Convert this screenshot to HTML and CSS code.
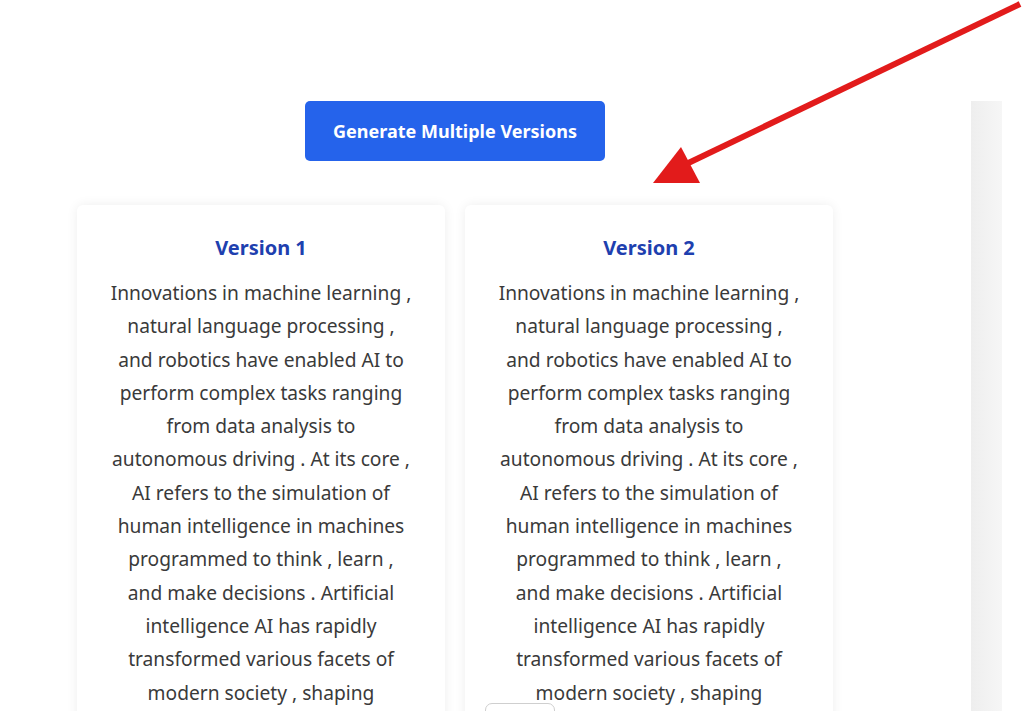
FILE: index.html
```html
<!DOCTYPE html>
<html lang="en">
<head>
<meta charset="utf-8">
<title>Generate Multiple Versions</title>
<link rel="stylesheet" href="styles.css">
</head>
<body>
<div class="page">
  <main class="main">
    <button class="generate-btn">Generate Multiple Versions</button>
    <div class="versions">
      <section class="card">
        <h2 class="card-title">Version 1</h2>
        <p class="card-text">Innovations in machine learning ,<br>natural language processing ,<br>and robotics have enabled AI to<br>perform complex tasks ranging<br>from data analysis to<br>autonomous driving . At its core ,<br>AI refers to the simulation of<br>human intelligence in machines<br>programmed to think , learn ,<br>and make decisions . Artificial<br>intelligence AI has rapidly<br>transformed various facets of<br>modern society , shaping<br>industries and everyday life .</p>
      </section>
      <section class="card">
        <h2 class="card-title">Version 2</h2>
        <p class="card-text">Innovations in machine learning ,<br>natural language processing ,<br>and robotics have enabled AI to<br>perform complex tasks ranging<br>from data analysis to<br>autonomous driving . At its core ,<br>AI refers to the simulation of<br>human intelligence in machines<br>programmed to think , learn ,<br>and make decisions . Artificial<br>intelligence AI has rapidly<br>transformed various facets of<br>modern society , shaping<br>industries and everyday life .</p>
        <div class="copy-tab"></div>
      </section>
    </div>
  </main>
  <aside class="side-strip"></aside>
</div>
<svg class="arrow" width="1024" height="711" viewBox="0 0 1024 711" aria-hidden="true">
  <line x1="1020" y1="4" x2="680" y2="167" stroke="#e21b1b" stroke-width="6" stroke-linecap="butt"/>
  <polygon points="653,183 700,183 681,147" fill="#e21b1b"/>
</svg>
</body>
</html>
```
FILE: styles.css
```css
* { box-sizing: border-box; }
html, body { margin: 0; padding: 0; background: #fff; }
body {
  font-family: "Noto Sans", "Open Sans", sans-serif;
  color: #3a3a3a;
  overflow: hidden;
  height: 711px;
}
.page {
  display: flex;
  align-items: flex-start;
}
.main {
  width: 910px;
  display: flex;
  flex-direction: column;
  align-items: center;
  padding-top: 101px;
}
.generate-btn {
  font-family: "Noto Sans", sans-serif;
  font-weight: 700;
  font-size: 18px;
  color: #fff;
  background: #2563eb;
  border: none;
  border-radius: 5px;
  height: 60px;
  padding: 0 28px;
  cursor: pointer;
}
.versions {
  display: flex;
  gap: 20px;
  margin-top: 44px;
}
.card {
  position: relative;
  width: 368px;
  height: 560px;
  overflow: hidden;
  background: #fff;
  border-radius: 6px;
  box-shadow: 0 0 12px rgba(0, 0, 0, 0.07);
  padding: 30px 14px 0;
  text-align: center;
}
.card-title {
  margin: 0 0 16px;
  font-size: 20px;
  line-height: 25px;
  font-weight: 700;
  color: #1e40af;
}
.card-text {
  margin: 0;
  font-size: 19.2px;
  line-height: 33.3px;
  color: #3a3a3a;
  white-space: nowrap;
}
.copy-tab {
  position: absolute;
  left: 20px;
  top: 498px;
  width: 70px;
  height: 20px;
  border: 1px solid #cfcfcf;
  border-radius: 7px;
  background: #fff;
}
.side-strip {
  margin-left: 61px;
  margin-top: 101px;
  width: 31px;
  height: 610px;
  background: linear-gradient(to right, #eeeeee, #f6f6f6);
}
.arrow {
  position: absolute;
  left: 0;
  top: 0;
  pointer-events: none;
}
```
